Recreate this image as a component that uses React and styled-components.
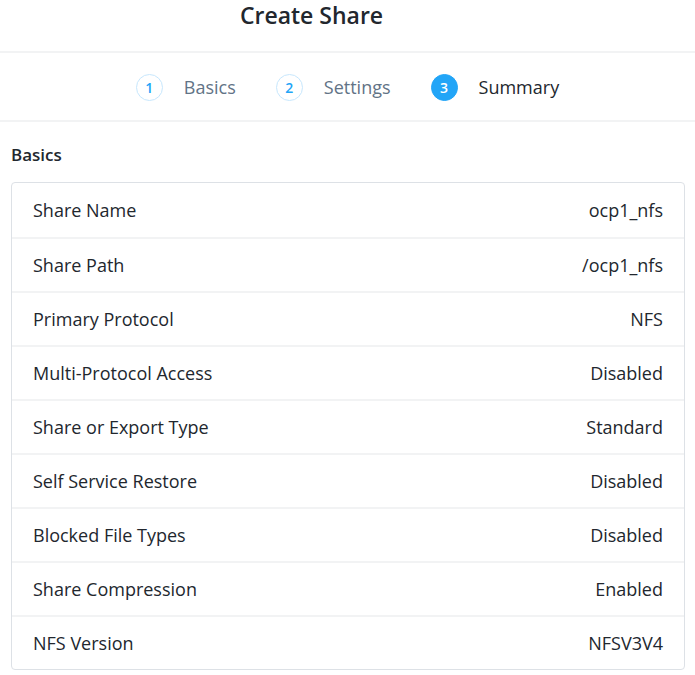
import styled, { createGlobalStyle } from 'styled-components';

const GlobalStyle = createGlobalStyle`
  html, body {
    margin: 0;
    padding: 0;
    background: #ffffff;
    font-family: "Open Sans", "Liberation Sans", sans-serif;
    color: #22272e;
  }
`;

const Page = styled.div`
  width: 695px;
  height: 675px;
  overflow: hidden;
  background: #fff;
`;

const Header = styled.h1`
  margin: 0;
  height: 53px;
  box-sizing: border-box;
  padding: 0 72px 0 0;
  text-align: center;
  font-size: 23px;
  font-weight: 600;
  line-height: 30px;
  color: #22272e;
  border-bottom: 2px solid #f2f3f4;
`;

const Steps = styled.div`
  height: 69px;
  box-sizing: border-box;
  padding-top: 1px;
  display: flex;
  align-items: center;
  justify-content: center;
  gap: 40px;
  border-bottom: 2px solid #f2f3f4;
`;

const Step = styled.div`
  display: flex;
  align-items: center;
  gap: 21px;
`;

const Circle = styled.span`
  width: 27px;
  height: 27px;
  box-sizing: border-box;
  border-radius: 50%;
  display: flex;
  align-items: center;
  justify-content: center;
  font-size: 14px;
  font-weight: 600;
  color: ${(p) => (p.active ? '#fff' : '#22a5f7')};
  background: ${(p) => (p.active ? '#22a5f7' : '#fff')};
  border: 1px solid ${(p) => (p.active ? '#22a5f7' : '#c7e7fd')};
`;

const StepLabel = styled.span`
  font-size: 18px;
  color: ${(p) => (p.active ? '#22272e' : '#627386')};
`;

const Section = styled.section`
  padding: 21px 10px 0 11px;
`;

const SectionTitle = styled.h2`
  margin: 0 0 15px;
  font-size: 17px;
  font-weight: 600;
  line-height: 24px;
  color: #22272e;
`;

const Card = styled.ul`
  list-style: none;
  margin: 0;
  padding: 0;
  border: 1px solid #dde1e6;
  border-radius: 4px;
`;

const Row = styled.li`
  height: 54px;
  box-sizing: border-box;
  display: flex;
  align-items: center;
  justify-content: space-between;
  padding: 0 21px;
  font-size: 18px;
  color: #22272e;
  border-top: ${(p) => (p.first ? 'none' : '2px solid #f2f3f4')};
`;

const steps = [
  { n: 1, label: 'Basics' },
  { n: 2, label: 'Settings' },
  { n: 3, label: 'Summary', active: true },
];

const rows = [
  ['Share Name', 'ocp1_nfs'],
  ['Share Path', '/ocp1_nfs'],
  ['Primary Protocol', 'NFS'],
  ['Multi-Protocol Access', 'Disabled'],
  ['Share or Export Type', 'Standard'],
  ['Self Service Restore', 'Disabled'],
  ['Blocked File Types', 'Disabled'],
  ['Share Compression', 'Enabled'],
  ['NFS Version', 'NFSV3V4'],
];

const App = () => (
  <Page>
    <GlobalStyle />
    <Header>Create Share</Header>
    <Steps>
      {steps.map((s) => (
        <Step key={s.n}>
          <Circle active={s.active}>{s.n}</Circle>
          <StepLabel active={s.active}>{s.label}</StepLabel>
        </Step>
      ))}
    </Steps>
    <Section>
      <SectionTitle>Basics</SectionTitle>
      <Card>
        {rows.map(([k, v], i) => (
          <Row key={k} first={i === 0}>
            <span>{k}</span>
            <span>{v}</span>
          </Row>
        ))}
      </Card>
    </Section>
  </Page>
);

export default App;
